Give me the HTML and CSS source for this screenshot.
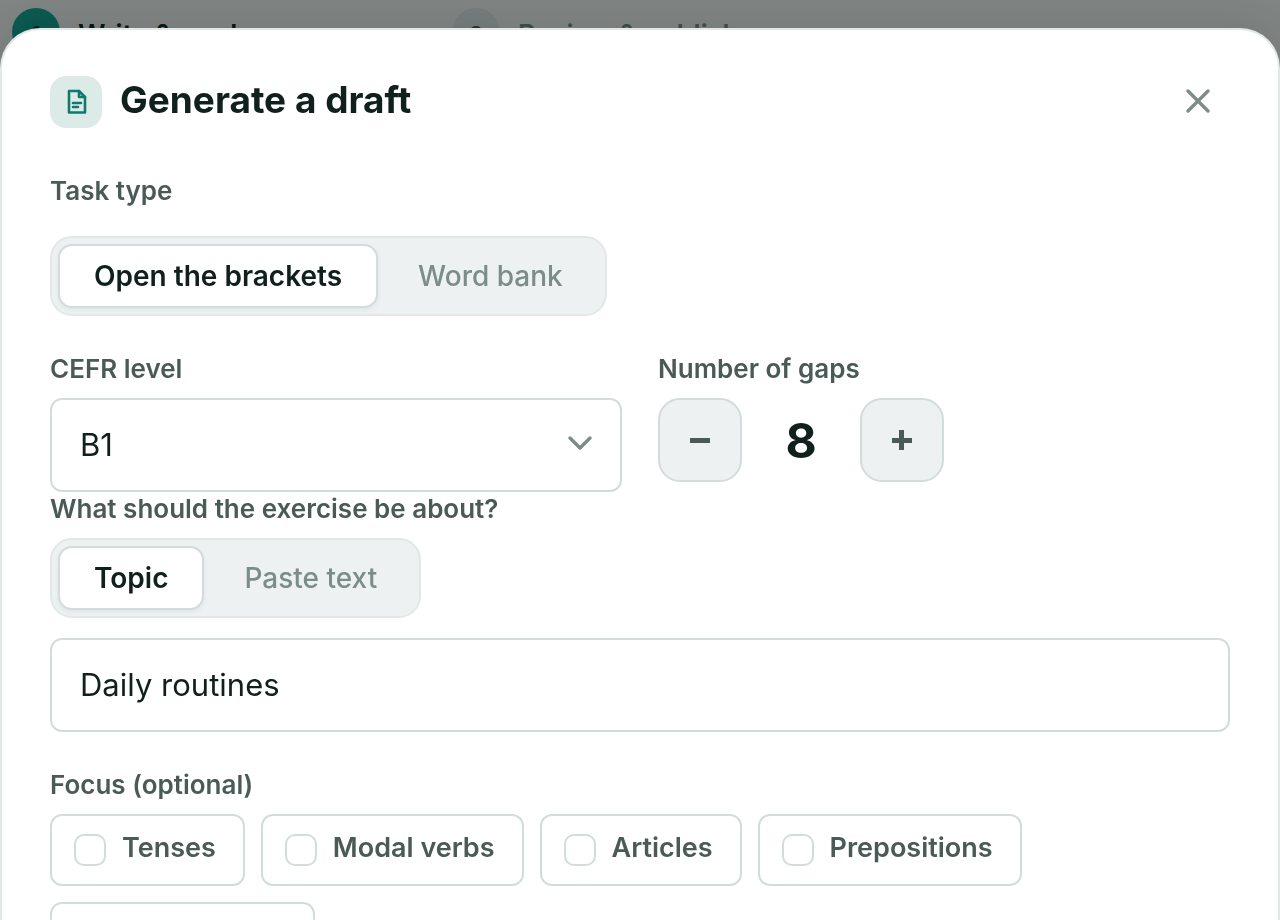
FILE: index.html
```html
<!DOCTYPE html>
<html lang="en">
<head>
    <meta charset="UTF-8">
    <meta name="viewport" content="width=device-width, initial-scale=1.0">
    <title>Generate a draft</title>
    <link rel="stylesheet" href="styles.css">
</head>
<body>
    <ol class="steps">
        <li class="step step-active"><span class="step-number">1</span><span class="step-name">Write &amp; mark</span></li>
        <li class="step"><span class="step-number">2</span><span class="step-name">Review &amp; publish</span></li>
    </ol>

    <div class="overlay">
        <form class="dialog" role="dialog" aria-labelledby="dialogTitle">
            <header class="dialog-header">
                <span class="dialog-icon">
                    <svg width="28" height="28" viewBox="0 0 28 28" fill="none" stroke="currentColor" stroke-width="2.6" stroke-linecap="round" stroke-linejoin="round">
                        <path d="M7 3h10l6 6v15.500H7z"/>
                        <path d="M17 3v6h6"/>
                        <path d="M11 15h8M11 19h5"/>
                    </svg>
                </span>
                <h1 id="dialogTitle">Generate a draft</h1>
                <button type="button" class="close" aria-label="Close">
                    <svg width="28" height="28" viewBox="0 0 28 28" fill="none" stroke="currentColor" stroke-width="3.4" stroke-linecap="round">
                        <path d="M4 3l20 20M24 3L4 23"/>
                    </svg>
                </button>
            </header>

            <div class="field field-task">
                <span class="label" id="taskLabel">Task type</span>
                <div class="segmented" role="group" aria-labelledby="taskLabel">
                    <button type="button" class="segment selected" aria-pressed="true">Open the brackets</button>
                    <button type="button" class="segment" aria-pressed="false">Word bank</button>
                </div>
            </div>

            <div class="columns">
                <div class="field">
                    <label class="label" for="level">CEFR level</label>
                    <div class="select-wrap">
                        <select id="level" class="control">
                            <option>A1</option>
                            <option>A2</option>
                            <option selected>B1</option>
                            <option>B2</option>
                            <option>C1</option>
                        </select>
                        <svg class="chevron" width="28" height="28" viewBox="0 0 28 28" fill="none" stroke="currentColor" stroke-width="3.4" stroke-linecap="round" stroke-linejoin="round">
                            <path d="M4 8l10 10L24 8"/>
                        </svg>
                    </div>
                </div>
                <div class="field">
                    <span class="label" id="gapsLabel">Number of gaps</span>
                    <div class="stepper" role="group" aria-labelledby="gapsLabel">
                        <button type="button" class="stepper-button" aria-label="Fewer gaps">
                            <svg width="20" height="20" viewBox="0 0 20 20" fill="currentColor"><path d="M0 8h20v5H0z"/></svg>
                        </button>
                        <output class="stepper-value">8</output>
                        <button type="button" class="stepper-button" aria-label="More gaps">
                            <svg width="20" height="20" viewBox="0 0 20 20" fill="currentColor"><path d="M0 8h7V0h5v8h8v5h-8v7H7v-7H0z"/></svg>
                        </button>
                    </div>
                </div>
            </div>

            <div class="field">
                <label class="label" for="topic">What should the exercise be about?</label>
                <div class="segmented">
                    <button type="button" class="segment selected" aria-pressed="true">Topic</button>
                    <button type="button" class="segment" aria-pressed="false">Paste text</button>
                </div>
                <input type="text" id="topic" class="control topic" value="Daily routines">
            </div>

            <fieldset class="field focus">
                <legend class="label">Focus (optional)</legend>
                <div class="chips">
                    <label class="chip"><input type="checkbox">Tenses</label>
                    <label class="chip"><input type="checkbox">Modal verbs</label>
                    <label class="chip"><input type="checkbox">Articles</label>
                    <label class="chip"><input type="checkbox">Prepositions</label>
                    <label class="chip"><input type="checkbox">Conditionals</label>
                </div>
            </fieldset>
        </form>
    </div>
</body>
</html>
```
FILE: styles.css
```css
* {
    box-sizing: border-box;
}
body {
    margin: 0;
    font-family: Inter, "Liberation Sans", sans-serif;
    background-color: #f8fbfa;
    color: #10201d;
    overflow: hidden;
}
h1 {
    margin: 0;
    padding-bottom: 4px;
    flex: 1;
    font-size: 37px;
    font-weight: 700;
    line-height: 48px;
}
button, input, select {
    font-family: inherit;
    color: inherit;
}
button {
    cursor: pointer;
}
svg {
    display: block;
}

/* Page behind the dialog */
.steps {
    display: grid;
    grid-template-columns: 440px 1fr;
    margin: 0;
    padding: 8px 12px;
    list-style: none;
}
.step {
    display: flex;
    align-items: center;
    gap: 18px;
    color: #7c8d88;
    font-size: 27px;
    font-weight: 600;
}
.step-active {
    color: #10201d;
}
.step-number,
.step-name {
    padding-top: 4px;
}
.step-number {
    display: flex;
    align-items: center;
    justify-content: center;
    width: 48px;
    height: 48px;
    border-radius: 50%;
    background-color: #e4ebea;
    color: #4a5b57;
    font-size: 22px;
}
.step-active .step-number {
    background-color: #12a592;
    color: #10201d;
}

/* Dialog */
.overlay {
    position: fixed;
    inset: 0;
    display: flex;
    align-items: flex-start;
    padding-top: 28px;
    background-color: rgba(8, 16, 14, 0.5);
    overflow: hidden;
}
.dialog {
    flex: 1;
    min-height: 100%;
    padding: 40px 48px;
    border: 2px solid #e1e8e6;
    border-bottom: none;
    border-radius: 40px 40px 0 0;
    background-color: white;
    box-shadow: 0 0 40px rgba(0, 0, 0, 0.1);
}
.dialog-header {
    display: flex;
    align-items: center;
    gap: 18px;
    height: 64px;
}
.dialog-icon {
    display: flex;
    align-items: center;
    justify-content: center;
    width: 52px;
    height: 52px;
    border-radius: 16px;
    background-color: #dcebe8;
    color: #0f7a6c;
}
.close {
    display: flex;
    align-items: center;
    justify-content: center;
    width: 64px;
    height: 64px;
    padding: 0;
    border: none;
    background: none;
    color: #7c8d88;
}

/* Fields */
.field {
    display: flex;
    flex-direction: column;
    align-items: flex-start;
    gap: 12px;
}
.field-task {
    gap: 28px;
    margin: 40px 0 36px;
}
.label {
    padding: 0;
    color: #4a5b57;
    font-size: 26px;
    font-weight: 600;
    line-height: 34px;
}
.columns {
    display: grid;
    grid-template-columns: 1fr 1fr;
    gap: 36px;
}
.segmented {
    display: flex;
    gap: 4px;
    padding: 6px;
    border: 2px solid #e1e8e6;
    border-radius: 22px;
    background-color: #edf1f2;
}
.segment {
    height: 64px;
    padding: 0 34px;
    border: 2px solid transparent;
    border-radius: 14px;
    background: none;
    color: #7c8d88;
    font-size: 28px;
    font-weight: 500;
}
.segment.selected {
    border-color: #d2dddb;
    background-color: white;
    color: #10201d;
    font-weight: 600;
    box-shadow: 0 2px 4px rgba(16, 32, 29, 0.06);
}
.control {
    width: 100%;
    height: 94px;
    padding: 0 28px 2px;
    border: 2px solid #d2dddb;
    border-radius: 12px;
    background-color: white;
    font-size: 31px;
}
.select-wrap {
    position: relative;
    width: 100%;
}
select.control {
    display: block;
    appearance: none;
}
.chevron {
    position: absolute;
    top: 32px;
    right: 28px;
    color: #7c8d88;
    pointer-events: none;
}
.topic {
    margin-top: 8px;
}
.stepper {
    display: flex;
    align-items: center;
    gap: 24px;
}
.stepper-button {
    display: flex;
    align-items: center;
    justify-content: center;
    width: 84px;
    height: 84px;
    border: 2px solid #d2dddb;
    border-radius: 22px;
    background-color: #edf1f2;
    color: #4a5b57;
}
.stepper-value {
    width: 70px;
    text-align: center;
    font-size: 48px;
    font-weight: 700;
}

/* Focus */
.focus {
    display: block;
    margin: 36px 0 0;
    padding: 0;
    border: none;
}
.chips {
    display: flex;
    flex-wrap: wrap;
    gap: 16px;
    margin-top: 12px;
}
.chip {
    display: flex;
    align-items: flex-start;
    gap: 16px;
    height: 72px;
    padding: 18px 27px 0 22px;
    border: 2px solid #d2dddb;
    border-radius: 12px;
    color: #4a5b57;
    font-size: 27px;
    font-weight: 600;
    line-height: 28px;
}
.chip input {
    appearance: none;
    width: 32px;
    height: 32px;
    margin: 0;
    border: 2px solid #d2dddb;
    border-radius: 10px;
    background-color: white;
}
.chip input:checked {
    background-color: #0f7a6c;
}
```
